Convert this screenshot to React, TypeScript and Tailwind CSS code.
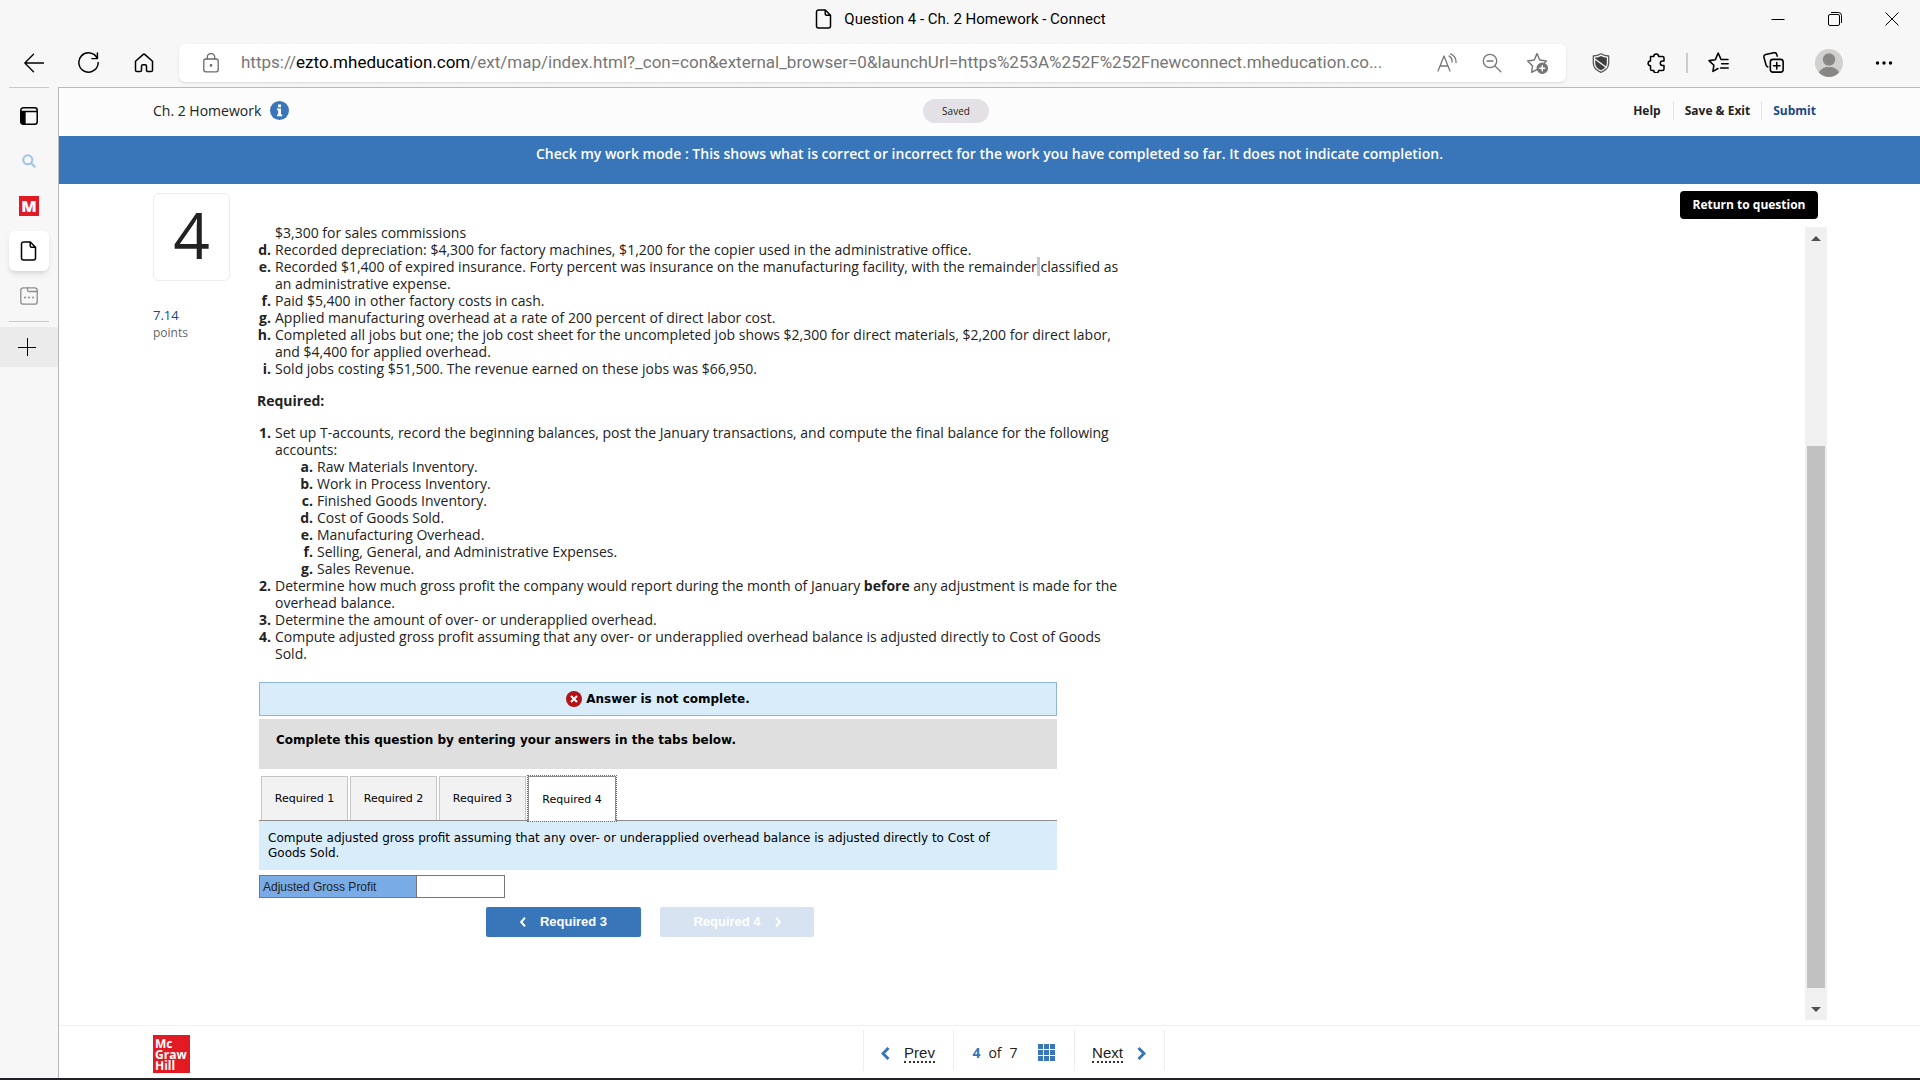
import type { ReactNode } from "react";

interface ListEntry {
  mark: string;
  body: ReactNode;
}

const TRANSACTIONS: ListEntry[] = [
  { mark: "", body: "$3,300 for sales commissions" },
  { mark: "d.", body: "Recorded depreciation: $4,300 for factory machines, $1,200 for the copier used in the administrative office." },
  {
    mark: "e.",
    body: (
      <>
        Recorded $1,400 of expired insurance. Forty percent was insurance on the manufacturing facility, with the
        remainder<span className="bg-[#c8c8c8]"> </span>classified as an administrative expense.
      </>
    ),
  },
  { mark: "f.", body: "Paid $5,400 in other factory costs in cash." },
  { mark: "g.", body: "Applied manufacturing overhead at a rate of 200 percent of direct labor cost." },
  {
    mark: "h.",
    body: "Completed all jobs but one; the job cost sheet for the uncompleted job shows $2,300 for direct materials, $2,200 for direct labor, and $4,400 for applied overhead.",
  },
  { mark: "i.", body: "Sold jobs costing $51,500. The revenue earned on these jobs was $66,950." },
];

const ACCOUNTS: ListEntry[] = [
  { mark: "a.", body: "Raw Materials Inventory." },
  { mark: "b.", body: "Work in Process Inventory." },
  { mark: "c.", body: "Finished Goods Inventory." },
  { mark: "d.", body: "Cost of Goods Sold." },
  { mark: "e.", body: "Manufacturing Overhead." },
  { mark: "f.", body: "Selling, General, and Administrative Expenses." },
  { mark: "g.", body: "Sales Revenue." },
];

const REQUIREMENTS: ListEntry[] = [
  {
    mark: "1.",
    body: (
      <>
        Set up T-accounts, record the beginning balances, post the January transactions, and compute the final balance
        for the following accounts:
        <MarkedList entries={ACCOUNTS} className="ml-6" />
      </>
    ),
  },
  {
    mark: "2.",
    body: (
      <>
        Determine how much gross profit the company would report during the month of January <b>before</b> any
        adjustment is made for the overhead balance.
      </>
    ),
  },
  { mark: "3.", body: "Determine the amount of over- or underapplied overhead." },
  {
    mark: "4.",
    body: "Compute adjusted gross profit assuming that any over- or underapplied overhead balance is adjusted directly to Cost of Goods Sold.",
  },
];

const TABS = ["Required 1", "Required 2", "Required 3", "Required 4"];

function MarkedList({ entries, className = "" }: { entries: ListEntry[]; className?: string }) {
  return (
    <ol className={className}>
      {entries.map((entry, i) => (
        <li key={i} className="flex gap-1">
          <span className="flex w-3.5 shrink-0 justify-end font-bold">{entry.mark}</span>
          <div className="min-w-0 flex-1">{entry.body}</div>
        </li>
      ))}
    </ol>
  );
}

/* ── Icons ── */
function Icon({ size = 20, children, className = "" }: { size?: number; children: ReactNode; className?: string }) {
  return (
    <svg
      width={size}
      height={size}
      viewBox="0 0 20 20"
      fill="none"
      stroke="currentColor"
      strokeWidth={1.3}
      strokeLinecap="round"
      strokeLinejoin="round"
      className={className}
      aria-hidden="true"
    >
      {children}
    </svg>
  );
}

function PageIcon({ size = 20 }: { size?: number }) {
  return (
    <Icon size={size}>
      <path strokeWidth={1.5} d="M4.5 1h6.8l5.2 5.2v10.9a2 2 0 0 1-2 2h-10a2 2 0 0 1-2-2V3a2 2 0 0 1 2-2zM11.2 1.2v3.6a1.5 1.5 0 0 0 1.5 1.5h3.6" />
    </Icon>
  );
}

function ToolButton({ label, children }: { label: string; children: ReactNode }) {
  return (
    <button type="button" aria-label={label} className="flex h-9 w-[55px] shrink-0 items-center justify-center">
      {children}
    </button>
  );
}

function AddressButton({ label, children }: { label: string; children: ReactNode }) {
  return (
    <button type="button" aria-label={label} className="flex h-9 w-[45px] shrink-0 items-center justify-center text-[#767676]">
      {children}
    </button>
  );
}

function SideButton({ label, children }: { label: string; children: ReactNode }) {
  return (
    <button type="button" aria-label={label} className="flex h-[45px] w-full items-center justify-center">
      {children}
    </button>
  );
}

/* ── Browser chrome ── */
function TitleBar() {
  return (
    <div className="flex h-[38px] items-center">
      <div className="flex-1" />
      <div className="flex items-center gap-2.5 text-[15px] leading-5">
        <PageIcon />
        <span>Question 4 - Ch. 2 Homework - Connect</span>
      </div>
      <div className="flex flex-1 justify-end">
        <button type="button" aria-label="Minimize" className="flex h-9 w-[57px] items-center justify-center">
          <svg width="14" height="14" viewBox="0 0 14 14" stroke="black"><path d="M.5 7.5h13" /></svg>
        </button>
        <button type="button" aria-label="Restore" className="flex h-9 w-[57px] items-center justify-center">
          <svg width="14" height="14" viewBox="0 0 14 14" fill="none" stroke="black">
            <rect x=".5" y="2.5" width="11" height="11" rx="1.5" />
            <path d="M3 .5h7.5a3 3 0 0 1 3 3V11" />
          </svg>
        </button>
        <button type="button" aria-label="Close" className="flex h-9 w-[57px] items-center justify-center">
          <svg width="14" height="14" viewBox="0 0 14 14" stroke="black"><path d="M.5.5l13 13M13.5.5l-13 13" /></svg>
        </button>
      </div>
    </div>
  );
}

function Toolbar() {
  return (
    <div className="flex h-[49px] items-center pr-[9px] pl-1.5">
      <ToolButton label="Back">
        <Icon><path d="M19.5 10H.8M9.5 1.3L.8 10l8.7 8.7" /></Icon>
      </ToolButton>
      <ToolButton label="Refresh">
        <Icon size={21}>
          <path strokeWidth={1.4} d="M18.3 6A9.2 9.2 0 1 0 19.2 10M18.5 1v5.3h-5.3" />
        </Icon>
      </ToolButton>
      <ToolButton label="Home">
        <Icon>
          <path strokeWidth={1.5} d="M1.5 8.3L9 1.6a1.5 1.5 0 0 1 2 0l7.5 6.7v9a1.3 1.3 0 0 1-1.3 1.3h-3.4a1.3 1.3 0 0 1-1.3-1.3v-4a1.5 1.5 0 0 0-1.5-1.5H9a1.5 1.5 0 0 0-1.5 1.5v4a1.3 1.3 0 0 1-1.3 1.3H2.8a1.3 1.3 0 0 1-1.3-1.3z" />
        </Icon>
      </ToolButton>

      <div className="mr-[7px] ml-2 flex h-[38px] min-w-0 flex-1 items-center rounded-md bg-white pr-[7px] pl-[22px] shadow-sm">
        <Icon className="text-[#6a6a6a]">
          <rect x="2.8" y="6" width="14.4" height="12.8" rx="2" />
          <path d="M6.3 6V4.2a3.7 3.7 0 0 1 7.4 0V6" />
          <circle cx="10" cy="12.4" r=".7" fill="currentColor" />
        </Icon>
        <div role="textbox" aria-label="Address" className="ml-5 min-w-0 flex-1 truncate text-[17px] text-[#767676]">
          https://<span className="text-black">ezto.mheducation.com</span>
          /ext/map/index.html?_con=con&amp;external_browser=0&amp;launchUrl=https%253A%252F%252Fnewconnect.mheducation.co...
        </div>
        <AddressButton label="Read aloud">
          <Icon><path d="M1 18L7 3l6 15M3 13h8M12 3a6 6 0 0 1 3 6M13.5.8A9 9 0 0 1 19 9.5" /></Icon>
        </AddressButton>
        <AddressButton label="Zoom out">
          <Icon><circle cx="8" cy="8" r="6.7" /><path d="M5 8h6M13 13l5.8 5.8" /></Icon>
        </AddressButton>
        <AddressButton label="Add to favorites">
          <Icon size={22}>
            <path d="M10 16l-4.9 2.4.9-5.7L1.5 8.2l6-.9L10 1.5l2.5 5.8 6 .9-1.5 1.5" />
            <circle cx="14.8" cy="14.8" r="4.6" fill="currentColor" />
            <path stroke="white" d="M12.5 14.8h4.6M14.8 12.5v4.6" />
          </Icon>
        </AddressButton>
      </div>

      <ToolButton label="Shield">
        <Icon className="text-[#5a5a5a]">
          <path d="M10 .8c2.5 1.6 5 2.2 7.7 2.2v7c0 4.5-3 7.4-7.7 9.3C5.3 17.4 2.3 14.5 2.3 10V3C5 3 7.5 2.4 10 .8z" />
          <path fill="#3f3f3f" stroke="none" d="M10 3c1.9 1 3.8 1.6 5.8 1.7V10c0 3.4-2.2 5.6-5.8 7.2-3.6-1.6-5.8-3.8-5.8-7.2V4.7C6.2 4.6 8.1 4 10 3z" />
          <path stroke="#f7f7f7" d="M4.5 6.5l11 8" />
        </Icon>
      </ToolButton>
      <ToolButton label="Extensions">
        <Icon>
          <path strokeWidth={1.5} d="M4.5 3.5h3.3a2.4 2.4 0 1 1 4.8 0h3.9a1.5 1.5 0 0 1 1.5 1.5v3h-1.5a2.2 2.2 0 0 0 0 4.4H18V16a1.5 1.5 0 0 1-1.5 1.5h-3.9a2.4 2.4 0 0 1-4.8 0H6A1.5 1.5 0 0 1 4.500 16v-3.300a2.400 2.400 0 1 1 0-4.800z" />
        </Icon>
      </ToolButton>
      <div className="flex w-2 justify-center"><div className="h-5 w-0.5 bg-[#cdcdcd]" /></div>
      <ToolButton label="Favorites">
        <Icon size={21}>
          <path strokeWidth={1.5} d="M9.5 15.7l-4.8 2.8.9-5.9L1 8.2l6-.9L9.7 1l2.8 6.2h6.5M13 11.2h6.2M12 15.2h7.2" />
        </Icon>
      </ToolButton>
      <ToolButton label="Collections">
        <Icon size={21}>
          <g strokeWidth={1.5}>
            <path d="M4.6 14.2a2.3 2.3 0 0 1-1.6-1.5L.9 5a2.3 2.3 0 0 1 1.7-2.7l7.8-1.6a2.3 2.3 0 0 1 2.7 1.6l.4 1.6" />
            <rect x="7" y="7" width="12.2" height="12.2" rx="2.5" />
            <path d="M10 13.1h6.2M13.1 10v6.2" />
          </g>
        </Icon>
      </ToolButton>
      <ToolButton label="Profile">
        <svg width="28" height="28" viewBox="0 0 28 28">
          <circle cx="14" cy="14" r="14" fill="#d2d0ce" />
          <circle cx="14" cy="10.5" r="6.2" fill="#8a8684" />
          <path d="M4 23.5c1.5-3.500 5-5.500 10-5.500s8.500 2 10 5.500A14 14 0 0 1 14 28 14 14 0 0 1 4 23.500z" fill="#8a8684" />
        </svg>
      </ToolButton>
      <ToolButton label="More">
        <svg width="18" height="4" viewBox="0 0 18 4"><circle cx="2.5" cy="2" r="1.7" /><circle cx="9" cy="2" r="1.7" /><circle cx="15.5" cy="2" r="1.7" /></svg>
      </ToolButton>
    </div>
  );
}

function SideTabs() {
  return (
    <aside className="flex w-[58px] shrink-0 flex-col">
      <div className="mx-[9px] mb-[5px] h-px bg-[#c9c9c9]" />
      <SideButton label="Tab actions">
        <Icon>
          <rect x="1.8" y="1.8" width="16.4" height="16.4" rx="2.5" strokeWidth={1.5} />
          <path fill="currentColor" d="M2 6h4v12H4a2 2 0 0 1-2-2z" />
          <path d="M2 5.5h16" />
        </Icon>
      </SideButton>
      <SideButton label="Search">
        <svg width="14" height="14" viewBox="0 0 14 14" fill="none" stroke="#9cc3e8" strokeWidth="2">
          <circle cx="5.8" cy="5.8" r="4.5" />
          <path d="M9 9l4.3 4.3" />
        </svg>
      </SideButton>
      <SideButton label="Connect">
        <span className="flex size-5 items-center justify-center bg-[#e21a23] font-['Noto_Sans'] text-base leading-5 font-black text-white">
          M
        </span>
      </SideButton>
      <SideButton label="Question 4">
        <span className="flex size-10 items-center justify-center rounded-md bg-white shadow-md">
          <PageIcon />
        </span>
      </SideButton>
      <SideButton label="Blank tab">
        <Icon className="text-[#8d8d8d]">
          <rect x="1.8" y="1.8" width="16.4" height="16.4" rx="2.5" />
          <path d="M8.5 2v2a1.5 1.5 0 0 0 1.5 1.5h8" />
          <path strokeWidth={2} d="M6 11.5h.01M10 11.5h.01M14 11.5h.01" />
        </Icon>
      </SideButton>
      <div className="mx-[9px] mt-[3px] mb-[5px] h-px bg-[#c9c9c9]" />
      <button type="button" aria-label="New tab" className="flex h-10 items-center justify-center bg-[#ebebeb] pr-1">
        <svg width="18" height="18" viewBox="0 0 18 18" stroke="black"><path d="M0 9.5h18M9.5 0v18" /></svg>
      </button>
    </aside>
  );
}

/* ── Assignment page ── */
function AssignmentHeader() {
  return (
    <header className="flex h-12 items-center bg-[#fcfcfc] pr-[104px] pb-[3px] pl-[37px]">
      <div className="flex-1">
        <div className="flex items-center gap-[9px] pl-[57px]">
          <h1 className="text-sm">Ch. 2 Homework</h1>
          <button type="button" aria-label="Information">
            <svg width="19" height="19" viewBox="0 0 19 19">
              <circle cx="9.5" cy="9.5" r="9.5" fill="#3875b9" />
              <path fill="white" d="M8 3.5h3v2.7H8zM7 7.500h4v6h1.200v1.800H7v-1.800h1.200V9.300H7z" />
            </svg>
          </button>
        </div>
      </div>
      <span className="w-[66px] rounded-xl bg-[#e3e1e5] text-center text-[10px] leading-6">Saved</span>
      <nav className="flex flex-1 justify-end text-xs leading-[19px] font-bold">
        <a href="#help" className="pr-3">Help</a>
        <a href="#save" className="border-l border-[#e4e4e4] px-[11px]">Save &amp; Exit</a>
        <a href="#submit" className="border-l border-[#e4e4e4] pl-[11px] text-[#17498a]">Submit</a>
      </nav>
    </header>
  );
}

function AnswerPanel() {
  return (
    <section className="mt-5 ml-0.5 w-[798px] font-['DejaVu_Sans',Verdana,sans-serif] text-xs text-black">
      <div className="flex h-[34px] items-center justify-center gap-1 border border-[#8fb4e0] bg-[#d9ecfa] font-bold">
        <svg width="16" height="16" viewBox="0 0 16 16">
          <circle cx="8" cy="8" r="8" fill="#b31217" />
          <path d="M5 5l6 6M11 5l-6 6" stroke="white" strokeWidth="2" />
        </svg>
        Answer is not complete.
      </div>
      <div className="mt-[3px] h-[50px] bg-[#dfdfdf] px-[17px] pt-[13px] leading-[17px] font-bold">
        Complete this question by entering your answers in the tabs below.
      </div>

      <div role="tablist" className="mt-[7px] flex gap-0.5 border-b border-[#8d8d8d] pl-0.5 text-[11px]">
        {TABS.map((tab, i) => {
          const active = i === TABS.length - 1;
          return (
            <button
              key={tab}
              type="button"
              role="tab"
              aria-selected={active}
              className={
                active
                  ? "-mb-px h-[45px] w-[88px] border border-b-0 border-[#8d8d8d] bg-white pt-0.5 outline-1 outline-[#3875b9] outline-dotted"
                  : "h-11 w-[87px] border border-b-0 border-[#c6c6c6] bg-[#f2f2f2] pt-0.5"
              }
            >
              {tab}
            </button>
          );
        })}
      </div>
      <p className="h-[49px] bg-[#d9ecfa] pt-2.5 pr-10 pl-[9px] leading-[15px]">
        Compute adjusted gross profit assuming that any over- or underapplied overhead balance is adjusted directly to
        Cost of Goods Sold.
      </p>

      <div className="mt-[5px] flex h-[23px] w-[246px] border border-[#777] font-['Liberation_Sans',Arial,sans-serif]">
        <label htmlFor="agp" className="w-[157px] border-r border-[#777] bg-[#79ace6] pl-[3px] leading-[22px] text-[#222]">
          Adjusted Gross Profit
        </label>
        <input id="agp" type="text" className="min-w-0 flex-1 bg-white px-1 outline-none" />
      </div>

      <div className="mt-[9px] ml-[227px] flex gap-[19px] font-['Liberation_Sans',Arial,sans-serif] text-[13px] font-bold text-white">
        <button type="button" className="flex h-[30px] w-[155px] items-center justify-center gap-3.5 rounded-xs bg-[#3875b9]">
          <svg width="6" height="10" viewBox="0 0 6 10" fill="none" stroke="white" strokeWidth="2"><path d="M5 .7L1.2 5 5 9.3" /></svg>
          Required 3
        </button>
        <button type="button" disabled className="flex h-[30px] w-[154px] items-center justify-center gap-3.5 rounded-xs bg-[#d7e3f1]">
          Required 4
          <svg width="6" height="10" viewBox="0 0 6 10" fill="none" stroke="white" strokeWidth="2"><path d="M1 .7L4.8 5 1 9.3" /></svg>
        </button>
      </div>
    </section>
  );
}

function ScrollTrack() {
  return (
    <div className="mt-[3px] flex w-[22px] shrink-0 flex-col bg-[#f0f0f0]" aria-hidden="true">
      <div className="flex h-[22px] items-center justify-center">
        <svg width="10" height="5" viewBox="0 0 10 5" fill="#505050"><path d="M0 5l5-5 5 5z" /></svg>
      </div>
      <div className="grow-[197]" />
      <div className="mx-0.5 grow-[542] bg-[#c1c1c1]" />
      <div className="grow-[10]" />
      <div className="flex h-[22px] items-center justify-center">
        <svg width="10" height="5" viewBox="0 0 10 5" fill="#505050"><path d="M0 0l5 5 5-5z" /></svg>
      </div>
    </div>
  );
}

function QuestionView() {
  return (
    <div className="flex flex-1 pr-[93px] pb-[5px] pl-[94px]">
      <div className="w-[77px] shrink-0 pt-[9px]">
        <div className="flex h-[88px] items-center justify-center rounded-md border border-[#ececec] pb-1 text-[64px] leading-none">
          4
        </div>
        <p className="mt-[26px] text-[13px] leading-[17px] text-[#17498a]">7.14</p>
        <p className="text-xs leading-[17px] text-[#666]">points</p>
      </div>

      <div className="ml-[27px] flex min-w-0 flex-1 flex-col pt-[7px]">
        <button type="button" className="mr-[9px] h-7 w-[138px] self-end rounded-sm bg-black text-xs font-bold text-white">
          Return to question
        </button>
        <div className="mt-[5px] flex flex-1">
          <div className="min-w-0 flex-1">
            <div className="max-w-[866px] text-sm leading-[17px]">
              <MarkedList entries={TRANSACTIONS} />
              <h2 className="my-[15px] font-bold">Required:</h2>
              <MarkedList entries={REQUIREMENTS} />
            </div>
            <AnswerPanel />
          </div>
          <ScrollTrack />
        </div>
      </div>
    </div>
  );
}

function PagerFooter() {
  return (
    <footer className="flex h-[53px] border-t border-[#f0f0f0] pl-12">
      <div className="flex-1">
        <div className="mt-[9px] ml-[46px] flex h-[38px] w-[37px] flex-col justify-center bg-[#e21a23] pl-0.5 text-xs leading-[11px] font-bold text-white">
          <span>Mc</span>
          <span>Graw</span>
          <span>Hill</span>
        </div>
      </div>
      <nav className="my-1 flex h-[41px] text-[15px]">
        <a href="#prev" className="flex w-[90px] items-center justify-center gap-3.5 border-l border-[#ededed] pt-1.5 font-['Liberation_Sans',Arial,sans-serif]">
          <svg width="9" height="13" viewBox="0 0 9 13" fill="none" stroke="#3875b9" strokeWidth="3"><path d="M7.5 1L2 6.5 7.5 12" /></svg>
          <span className="border-b-2 border-dotted border-[#333] leading-4">Prev</span>
        </a>
        <div className="flex w-[121px] items-center justify-center gap-5 border-l border-[#ededed] pt-1 text-sm">
          <span className="flex gap-2"><b className="text-[#3875b9]">4</b> <span>of</span> <span>7</span></span>
          <button type="button" aria-label="Question grid">
            <svg width="17" height="17" viewBox="0 0 17 17" fill="#3875b9">
              <path d="M0 0h5v5H0zM6 0h5v5H6zM12 0h5v5h-5zM0 6h5v5H0zM6 6h5v5H6zM12 6h5v5h-5zM0 12h5v5H0zM6 12h5v5H6zM12 12h5v5h-5z" />
            </svg>
          </button>
        </div>
        <a href="#next" className="flex w-[91px] items-center justify-center gap-3.5 border-x border-[#ededed] pt-1.5 font-['Liberation_Sans',Arial,sans-serif]">
          <span className="border-b-2 border-dotted border-[#333] leading-4">Next</span>
          <svg width="9" height="13" viewBox="0 0 9 13" fill="none" stroke="#3875b9" strokeWidth="3"><path d="M1.5 1L7 6.5 1.5 12" /></svg>
        </a>
      </nav>
      <div className="flex-1" />
    </footer>
  );
}

export default function App() {
  return (
    <div className="flex min-h-screen flex-col border-b-2 border-[#222226] bg-[#f7f7f7] font-[Roboto,sans-serif] text-black">
      <TitleBar />
      <Toolbar />
      <div className="flex flex-1">
        <SideTabs />
        <main className="flex min-w-0 flex-1 flex-col border-t border-l border-[#b9b9b9] bg-white font-['Open_Sans',sans-serif] text-[#222]">
          <AssignmentHeader />
          <div className="h-12 bg-[#3875b9] px-4 pt-2 text-center text-sm font-semibold text-white">
            Check my work mode : This shows what is correct or incorrect for the work you have completed so far. It does
            not indicate completion.
          </div>
          <QuestionView />
          <PagerFooter />
        </main>
      </div>
    </div>
  );
}
